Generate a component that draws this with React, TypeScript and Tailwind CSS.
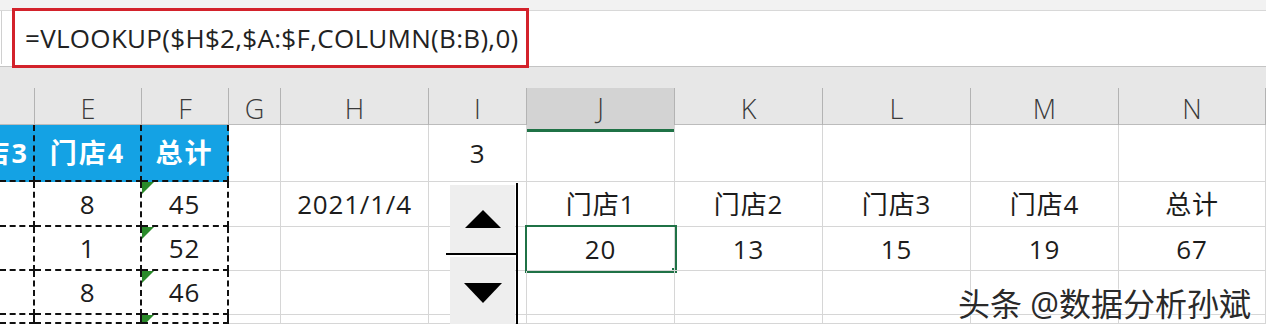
const COLS = ['', 'E', 'F', 'G', 'H', 'I', 'J', 'K', 'L', 'M', 'N'];

type Cell = { text?: string; blue?: boolean; flag?: boolean; selected?: boolean; cut?: boolean };

const rows: Cell[][] = [
  [
    { text: '门店3', blue: true, cut: true },
    { text: '门店4', blue: true },
    { text: '总计', blue: true },
    {}, {}, { text: '3' }, {}, {}, {}, {}, {},
  ],
  [
    {}, { text: '8' }, { text: '45', flag: true }, {}, { text: '2021/1/4' }, {},
    { text: '门店1' }, { text: '门店2' }, { text: '门店3' }, { text: '门店4' }, { text: '总计' },
  ],
  [
    {}, { text: '1' }, { text: '52', flag: true }, {}, {}, {},
    { text: '20', selected: true }, { text: '13' }, { text: '15' }, { text: '19' }, { text: '67' },
  ],
  [{}, { text: '8' }, { text: '46', flag: true }, {}, {}, {}, {}, {}, {}, {}, {}],
  [{}, {}, { flag: true }, {}, {}, {}, {}, {}, {}, {}, {}],
];

function GridCell({ cell, col }: { cell: Cell; col: number }) {
  const copied = col <= 2;
  return (
    <div
      className={`relative flex items-center overflow-hidden ${
        copied ? 'border-r-2 border-b-2 border-dashed border-[#111]' : 'border-r border-b border-[#d6d6d6]'
      } ${
        cell.blue
          ? 'bg-[#14a2e4] text-white font-bold text-[27px] tracking-[2px]'
          : 'text-[#1c1c1c] text-[26px] tracking-[0.8px]'
      } ${cell.cut ? 'justify-end pr-[4px]' : 'justify-center'} ${
        cell.selected ? 'outline-2 outline-[#1f7246]' : ''
      }`}
    >
      {cell.flag && (
        <svg className="absolute left-0 top-0" width="12" height="12" viewBox="0 0 12 12">
          <polygon points="0,0 12,0 0,12" fill="#2a8a2a" />
        </svg>
      )}
      {cell.text && <span className="whitespace-nowrap leading-none">{cell.text}</span>}
      {cell.selected && (
        <div className="absolute -right-[4px] -bottom-[4px] w-[7px] h-[7px] bg-[#1f7246] border border-white" />
      )}
    </div>
  );
}

export default function App() {
  return (
    <div
      className="relative w-[1266px] h-[324px] overflow-hidden bg-white"
      style={{ fontFamily: '"Open Sans", "Noto Sans CJK SC", sans-serif' }}
    >
      {/* formula bar */}
      <div className="relative h-[67px] bg-white border-b border-[#c4c4c4]">
        <div className="h-[11px] bg-[#f2f2f2] border-b border-[#d8d8d8]" />
        <div className="absolute left-[1px] top-[11px] bottom-[2px] w-px bg-[#d0d0d0]" />
        <div className="absolute left-[12px] top-[8px] w-[517px] h-[60px] border-[3px] border-[#d3222b] bg-white flex items-center pl-[10px]">
          <span className="text-[26px] text-[#222] tracking-[0.3px]">=VLOOKUP($H$2,$A:$F,COLUMN(B:B),0)</span>
        </div>
      </div>

      {/* column headers */}
      <div className="h-[58px] bg-[#e7e7e7] flex flex-col justify-end">
        <div className="h-[37px] grid grid-cols-[35px_107px_87px_52px_148px_98px_148px_148px_148px_148px_147px] border-b border-[#bcbcbc]">
          {COLS.map((c, i) => (
            <div
              key={i}
              className={`flex items-center justify-center text-[27px] font-light text-[#3a3a3a] border-r border-[#b3b3b3] ${
                c === 'J' ? 'bg-[#d3d3d3] border-b-[3px] border-b-[#1f7246] -mb-px' : ''
              }`}
            >
              {c}
            </div>
          ))}
        </div>
      </div>

      {/* cells */}
      <div className="h-[199px] grid grid-cols-[35px_107px_87px_52px_148px_98px_148px_148px_148px_148px_147px] grid-rows-[57px_45px_44px_44px_1fr]">
        {rows.map((row, r) => row.map((cell, c) => <GridCell key={`${r}-${c}`} cell={cell} col={c} />))}
      </div>

      {/* spin button control */}
      <div className="absolute left-[446px] top-[183px] w-[72px] h-[141px] flex flex-col border-r-2 border-black">
        <div className="h-[70px] pt-[2px] pl-[4px] pr-[1px]">
          <div className="h-full bg-[#eeeeee] flex items-center justify-center">
            <svg width="36" height="18" viewBox="0 0 36 18">
              <polygon points="18,0 36,18 0,18" fill="#000" />
            </svg>
          </div>
        </div>
        <div className="h-[2px] bg-black" />
        <div className="flex-1 pt-[2px] pl-[4px] pr-[1px]">
          <div className="h-full bg-[#eeeeee] flex items-start justify-center pt-[26px]">
            <svg width="38" height="20" viewBox="0 0 38 20">
              <polygon points="0,0 38,0 19,20" fill="#000" />
            </svg>
          </div>
        </div>
      </div>

      {/* watermark */}
      <div
        className="absolute left-[958px] top-[280px] text-[32px] text-[#2a2a2a] whitespace-nowrap"
        style={{ textShadow: '0 0 2px #fff, 0 0 2px #fff' }}
      >
        头条 @数据分析孙斌
      </div>
    </div>
  );
}
